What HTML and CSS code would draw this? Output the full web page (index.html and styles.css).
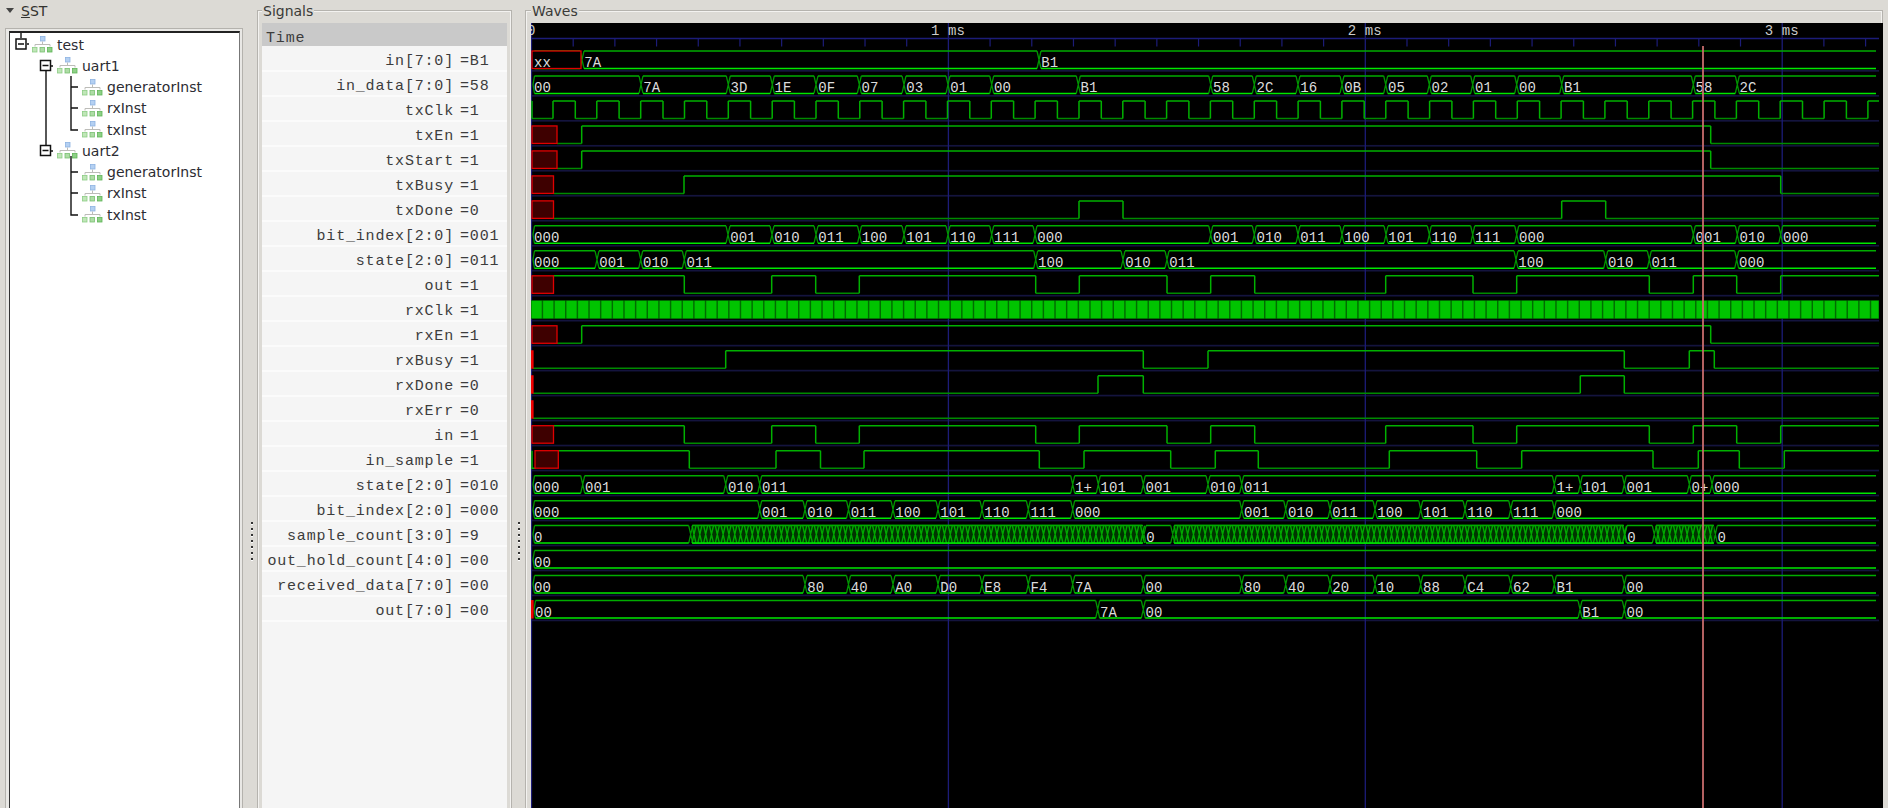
FILE: index.html
```html
<!DOCTYPE html>
<html lang="en">
<head>
  <meta charset="UTF-8" />
  <title>GTKWave - test</title>
  <link rel="stylesheet" href="styles.css">
</head>
<body>
  <svg class="defs" width="0" height="0">
    <symbol id="hier" viewBox="0 0 21 17">
      <rect x="8.5" y="0.5" width="4.5" height="4.5" fill="#b4d0f2" stroke="#8db2e2" stroke-width="0.8"/>
      <path d="M10.5 5.5V8M3 10.5V8.5H18V10.5" fill="none" stroke="#bcbcb8" stroke-width="1"/>
      <rect x="0.5" y="11.5" width="4.5" height="4.5" fill="#c0e6b8" stroke="#8ccc84" stroke-width="0.8"/>
      <rect x="8" y="11.5" width="4.5" height="4.5" fill="#aedca6" stroke="#78c070" stroke-width="0.8"/>
      <rect x="15.5" y="11.5" width="4.5" height="4.5" fill="#8ed086" stroke="#60b458" stroke-width="0.8"/>
    </symbol>
  </svg>

  <div class="app">
    <div class="sst">
      <div class="sst-head">
        <span class="arrow"></span>
        <span class="sst-title"><u>S</u>ST</span>
      </div>
      <div class="tree-frame">
        <div class="tree">
          <svg class="tree-lines" width="231" height="240" viewBox="10 33 231 240">
            <path d="M21 33V38M27 44H29M46 71V145M50 66H53M71 76V130H78M71 87H78M71 108H78M50 151H53M71 156V215H78M71 172H78M71 193H78" fill="none" stroke="#111" stroke-width="1.4"/>
            <path d="M16 39H26V49H16ZM40.5 60.5H50.5V70.5H40.5ZM40.5 145.5H50.5V155.5H40.5Z" fill="#fff" stroke="#111" stroke-width="1.5"/>
            <path d="M18 44H24M42.5 65.5H48.5M42.5 150.5H48.5" stroke="#111" stroke-width="1.3"/>
          </svg>
          <div class="node lvl0"><svg class="ico"><use href="#hier"/></svg>test</div>
          <div class="node lvl1"><svg class="ico"><use href="#hier"/></svg>uart1</div>
          <div class="node lvl2"><svg class="ico"><use href="#hier"/></svg>generatorInst</div>
          <div class="node lvl2"><svg class="ico"><use href="#hier"/></svg>rxInst</div>
          <div class="node lvl2"><svg class="ico"><use href="#hier"/></svg>txInst</div>
          <div class="node lvl1"><svg class="ico"><use href="#hier"/></svg>uart2</div>
          <div class="node lvl2"><svg class="ico"><use href="#hier"/></svg>generatorInst</div>
          <div class="node lvl2"><svg class="ico"><use href="#hier"/></svg>rxInst</div>
          <div class="node lvl2"><svg class="ico"><use href="#hier"/></svg>txInst</div>
        </div>
      </div>
    </div>

    <div class="handle first"><span class="dots"></span></div>

    <div class="frame signals">
      <span class="frame-label">Signals</span>
      <div class="sig-list">
        <div class="sig-time">Time</div>
        <div class="sig"><span class="name">in[7:0]</span><span class="val">=B1</span></div>
        <div class="sig"><span class="name">in_data[7:0]</span><span class="val">=58</span></div>
        <div class="sig"><span class="name">txClk</span><span class="val">=1</span></div>
        <div class="sig"><span class="name">txEn</span><span class="val">=1</span></div>
        <div class="sig"><span class="name">txStart</span><span class="val">=1</span></div>
        <div class="sig"><span class="name">txBusy</span><span class="val">=1</span></div>
        <div class="sig"><span class="name">txDone</span><span class="val">=0</span></div>
        <div class="sig"><span class="name">bit_index[2:0]</span><span class="val">=001</span></div>
        <div class="sig"><span class="name">state[2:0]</span><span class="val">=011</span></div>
        <div class="sig"><span class="name">out</span><span class="val">=1</span></div>
        <div class="sig"><span class="name">rxClk</span><span class="val">=1</span></div>
        <div class="sig"><span class="name">rxEn</span><span class="val">=1</span></div>
        <div class="sig"><span class="name">rxBusy</span><span class="val">=1</span></div>
        <div class="sig"><span class="name">rxDone</span><span class="val">=0</span></div>
        <div class="sig"><span class="name">rxErr</span><span class="val">=0</span></div>
        <div class="sig"><span class="name">in</span><span class="val">=1</span></div>
        <div class="sig"><span class="name">in_sample</span><span class="val">=1</span></div>
        <div class="sig"><span class="name">state[2:0]</span><span class="val">=010</span></div>
        <div class="sig"><span class="name">bit_index[2:0]</span><span class="val">=000</span></div>
        <div class="sig"><span class="name">sample_count[3:0]</span><span class="val">=9</span></div>
        <div class="sig"><span class="name">out_hold_count[4:0]</span><span class="val">=00</span></div>
        <div class="sig"><span class="name">received_data[7:0]</span><span class="val">=00</span></div>
        <div class="sig"><span class="name">out[7:0]</span><span class="val">=00</span></div>
      </div>
    </div>

    <div class="handle second"><span class="dots"></span></div>

    <div class="frame waves">
      <span class="frame-label">Waves</span>
      <svg id="wave" class="wave" width="1352" height="785" viewBox="531 23 1352 785"></svg>
    </div>
  </div>

  <script src="app.js"></script>
</body>
</html>
```

FILE: styles.css
```css
html, body {
  margin: 0;
  height: 100%;
  overflow: hidden;
  background: #dcdad5;
  color: #33332f;
  font-family: "DejaVu Sans", sans-serif;
  font-size: 14px;
}
.defs { position: absolute; }
.app {
  display: flex;
  height: 808px;
  overflow: hidden;
}

/* left tree */
.sst {
  width: 247px;
  flex: none;
  padding-left: 5px;
  box-sizing: border-box;
}
.sst-head {
  height: 28px;
  display: flex;
  align-items: flex-start;
  line-height: 23px;
}
.arrow {
  width: 0;
  height: 0;
  margin: 8px 7px 0 1px;
  border-left: 4.5px solid transparent;
  border-right: 4.5px solid transparent;
  border-top: 5px solid #444;
}
.tree-frame {
  width: 238px;
  height: 800px;
  box-sizing: border-box;
  border: 1px solid #b4b2ad;
  border-bottom: 0;
  padding: 2px 2px 0 3px;
  background: #e9e8e5;
}
.tree {
  position: relative;
  height: 100%;
  box-sizing: border-box;
  background: #fff;
  border-top: 2px solid #222;
  border-left: 1px solid #333;
  border-right: 1px solid #777;
  padding-top: 1px;
}
.tree-lines { position: absolute; left: 0; top: 0; }
.node {
  position: relative;
  height: 21.25px;
  display: flex;
  align-items: center;
  color: #2c2c33;
}
.lvl0 { padding-left: 22px; }
.lvl1 { padding-left: 47px; }
.lvl2 { padding-left: 72px; }
.ico {
  width: 21px;
  height: 17px;
  margin-right: 4px;
  flex: none;
}

/* pane handles */
.handle {
  flex: none;
  box-sizing: border-box;
  padding-top: 522px;
  display: flex;
  justify-content: center;
}
.handle.first { width: 10px; }
.handle.second { width: 13px; }
.dots {
  width: 2px;
  height: 42px;
  background: repeating-linear-gradient(#333 0 2px, #fff 2px 3px, transparent 3px 6px);
}

/* framed panes */
.frame {
  flex: none;
  box-sizing: border-box;
  height: 830px;
  margin-top: 10px;
  border: 1px solid #b5b3ae;
  box-shadow: inset 0 0 0 1px #f3f2f0;
}
.frame-label {
  display: block;
  height: 22px;
  margin-top: -10px;
  line-height: 20px;
  color: #3a3a38;
}
.signals {
  width: 255px;
  padding: 0 4px;
}
.waves {
  width: 1358px;
  padding: 0 4px 0 5px;
}
.frame-label {
  width: fit-content;
  max-height: 22px;
  background: linear-gradient(#dcdad5 14px, transparent 14px);
  padding: 0 1px;
}

/* signal names */
.sig-list {
  font-family: "Liberation Mono", monospace;
  font-size: 15px;
  letter-spacing: 0.82px;
  color: #3c3c3c;
  background: #f5f5f5;
  height: 800px;
}
.sig-time {
  height: 23px;
  margin-bottom: 1px;
  background: #c9c9c9;
  padding-left: 4px;
  line-height: 31px;
}
.sig {
  height: 23px;
  display: flex;
  line-height: 29px;
  border-bottom: 2px solid #fbfbfb;
}
.name {
  width: 192px;
  text-align: right;
}
.val { margin-left: 6px; }

/* wave canvas */
.wave {
  display: block;
  background: #000;
}
.bus-text, .time-text {
  font-family: "Liberation Mono", monospace;
  font-size: 14px;
  letter-spacing: 0.1px;
  fill: #dcdcdc;
}
.time-text { fill: #cbcbcb; }
```

FILE: app.js
```js
const svg = document.getElementById("wave");
const LEFT = 531.5, RIGHT = 1879, BUS_END = 1876, BOTTOM = 808;
const ZERO = 531.5, MS = 416.9;
const GRID = "#1c1c78", ROWLINE = "#14143e";
const HIGH = "#00b000", LOW = "#008a00", BUS_TOP = "#00ac00", BUS_LOW = "#00e800";
let out = "";

const top_ = (i) => 51 + 24.98 * i;
const bot = (i) => top_(i) + 17.5;

function line(d, color, w) {
  out += `<path d="${d}" fill="none" stroke="${color}" stroke-width="${w || 1.5}"/>`;
}

// level: 1 high, 0 low, toggles at every edge
function digital(i, start, level, edges) {
  let hi = "", lo = "", x = start;
  const list = edges.concat([RIGHT]);
  list.forEach((e, n) => {
    const y = level ? top_(i) : bot(i);
    if (level) hi += `M${x} ${y}H${e}`;
    else lo += `M${x} ${y}H${e}`;
    if (n < list.length - 1) hi += `M${e} ${top_(i)}V${bot(i)}`;
    x = e;
    level = 1 - level;
  });
  line(lo, LOW);
  line(hi, HIGH);
}

function bus(i, times, values, start) {
  const a = top_(i), b = bot(i), mid = (a + b) / 2;
  let upper = "", lower = "", cross = "";
  let x = start || 533;
  cross += `M${x + 1.5} ${a}L${x} ${mid}L${x + 1.5} ${b}`;
  let prev = x + 1.5;
  times.concat([BUS_END + 2]).forEach((t, n) => {
    upper += `M${prev} ${a}H${t - 2}`;
    lower += `M${prev} ${b}H${t - 2}`;
    if (n < times.length) cross += `M${t - 2} ${a}L${t + 2} ${b}M${t - 2} ${b}L${t + 2} ${a}`;
    prev = t + 2;
  });
  line(cross, "#009400", 1.3);
  line(upper, BUS_TOP);
  line(lower, BUS_LOW);
  values.forEach((v, n) => {
    const tx = n === 0 ? x + 1 : times[n - 1] + 2.2;
    out += `<text class="bus-text" x="${tx}" y="${a + 16}">${v}</text>`;
  });
}

function redBox(i, x1, x2) {
  out += `<rect x="${x1}" y="${top_(i)}" width="${x2 - x1}" height="17.5" fill="#3e0000" stroke="#e00000" stroke-width="1.3"/>`;
}
function redStripe(i) {
  out += `<rect x="531" y="${top_(i) - 0.5}" width="2.6" height="18.5" fill="#f00000"/>`;
}

// grid and ruler
for (let i = 0; i <= 22; i++) {
  out += `<rect x="531" y="${top_(i) + 19}" width="${RIGHT - 531}" height="1.7" fill="${ROWLINE}"/>`;
}
let ticks = "";
for (let k = 0; k <= 32; k++) {
  const x = ZERO + MS * k / 10;
  if (k % 10 === 0) line(`M${x} 23V${BOTTOM}`, GRID, 1.3);
  else ticks += `M${x} 38.5V46.5`;
}
line(ticks, GRID, 1.2);
line(`M${LEFT} 38.5H${RIGHT}`, GRID, 1.3);
out += `<text class="time-text" x="527" y="35">0</text>`;
[1, 2, 3].forEach((m) => {
  out += `<text class="time-text" x="${ZERO + MS * m - 17.5}" y="35">${m} ms</text>`;
});

// edge lists
const txOut = [684.3, 771.7, 815.7, 859.3, 1035.7, 1079.3, 1167, 1210.7, 1254.7, 1385.7, 1473, 1516.7, 1649.3, 1693.3, 1736.7, 1780.7];
const sampled = [689.3, 776, 820.5, 864, 1039.3, 1084, 1170.7, 1215.3, 1258.3, 1389.3, 1476.7, 1521.7, 1653, 1698.3, 1739.3, 1784.3];
const clkEdges = [532];
for (let k = 0; k < 31; k++) {
  const rise = 553 + 43.83 * k;
  clkEdges.push(Math.round(rise * 10) / 10);
  if (rise + 22.3 < RIGHT) clkEdges.push(Math.round((rise + 22.3) * 10) / 10);
}

// 0 in[7:0]
bus(0, [582, 1039], ["xx", "7A", "B1"]);
out += `<rect x="532" y="${top_(0)}" width="49" height="17.5" fill="#000" stroke="#e00000" stroke-width="1.3"/>`;
out += `<text class="bus-text" x="534" y="${top_(0) + 16}">xx</text>`;

// 1 in_data[7:0]
bus(1, [641, 728.3, 772.3, 816, 859.3, 904, 948, 991.7, 1078.3, 1210.7, 1254.3, 1298, 1342, 1385.7, 1429.3, 1472.7, 1516.7, 1561.7, 1693.3, 1737.3],
  ["00", "7A", "3D", "1E", "0F", "07", "03", "01", "00", "B1", "58", "2C", "16", "0B", "05", "02", "01", "00", "B1", "58", "2C"]);

// 2 txClk
digital(2, 531.5, 1, clkEdges);

// 3 txEn, 4 txStart
digital(3, 557, 0, [581.7, 1710.7]); redBox(3, 532, 557);
digital(4, 557, 0, [581.7, 1710.7]); redBox(4, 532, 557);

// 5 txBusy, 6 txDone
digital(5, 553.5, 0, [684, 1780.7]); redBox(5, 532, 553.5);
digital(6, 553.5, 0, [1079, 1123, 1561.7, 1605.7]); redBox(6, 532, 553.5);

// 7 bit_index, 8 state
bus(7, [728, 772, 816, 859.5, 904, 948, 991.7, 1035, 1210.7, 1254.3, 1298, 1342, 1386, 1429.3, 1472.7, 1516.7, 1693.3, 1737.3, 1780.7],
  ["000", "001", "010", "011", "100", "101", "110", "111", "000", "001", "010", "011", "100", "101", "110", "111", "000", "001", "010", "000"]);
bus(8, [597, 640.7, 684.3, 1035.7, 1123, 1167, 1516, 1605.7, 1649.3, 1736.7],
  ["000", "001", "010", "011", "100", "010", "011", "100", "010", "011", "000"]);

// 9 out
digital(9, 553.5, 1, txOut); redBox(9, 532, 553.5);

// 10 rxClk: too fast to show, solid blocks
const PERIOD = 11.65;
out += `<rect x="531" y="${top_(10) - 0.5}" width="${RIGHT - 531}" height="18.5" fill="#006c00"/>`;
for (let x = 531.5; x < RIGHT; x += PERIOD) {
  const w = Math.min(10.2, RIGHT - x - 0.5);
  out += `<rect x="${x}" y="${top_(10)}" width="${w}" height="17.5" fill="#00c400"/>`;
}

// 11 rxEn .. 14 rxErr
digital(11, 557, 0, [581.7, 1710.7]); redBox(11, 532, 557);
digital(12, 533, 0, [725.7, 1143.3, 1208, 1624.3, 1689.3, 1714.3]); redStripe(12);
digital(13, 533, 0, [1098, 1143.3, 1580.3, 1624.3]); redStripe(13);
digital(14, 533, 0, []); redStripe(14);

// 15 in, 16 in_sample
digital(15, 553.5, 1, txOut); redBox(15, 532, 553.5);
line(`M532 ${top_(16)}V${bot(16)}H536`, HIGH);
digital(16, 558, 1, sampled); redBox(16, 535, 558.3);

// 17 state, 18 bit_index
bus(17, [582.7, 725.7, 759.7, 1072.7, 1098.3, 1143.3, 1208, 1241.7, 1554.3, 1580.3, 1624.3, 1689.3, 1712],
  ["000", "001", "010", "011", "1+", "101", "001", "010", "011", "1+", "101", "001", "0+", "000"]);
bus(18, [759.7, 805, 848.5, 893, 938, 982, 1028.3, 1072.7, 1241.7, 1285.7, 1330, 1375, 1420.7, 1465, 1510.7, 1554.3],
  ["000", "001", "010", "011", "100", "101", "110", "111", "000", "001", "010", "011", "100", "101", "110", "111", "000"]);

// 19 sample_count: counting bursts are drawn as dense crossings
function burst(i, x1, x2) {
  const a = top_(i), b = bot(i);
  let d = "";
  for (let x = x1; x < x2 - 1; x += PERIOD / 2) {
    d += `M${x} ${a}L${x + 4} ${b}M${x} ${b}L${x + 4} ${a}`;
  }
  out += `<rect x="${x1}" y="${a}" width="${x2 - x1}" height="17.5" fill="#003400"/>`;
  line(d, "#00a800", 1.4);
  line(`M${x1} ${a}H${x2}`, BUS_TOP);
  line(`M${x1} ${b}H${x2}`, BUS_LOW);
}
bus(19, [690.7, 1144, 1172.7, 1625, 1654.3, 1715.3], ["0", "", "0", "", "0", "", "0"]);
burst(19, 692, 1143);
burst(19, 1174, 1624);
burst(19, 1656, 1714);

// 20 out_hold_count, 21 received_data
bus(20, [], ["00"]);
bus(21, [805, 848.5, 893, 938, 982, 1028.3, 1072.7, 1143.3, 1241.7, 1285.7, 1330, 1375, 1420.7, 1465, 1510.7, 1554.3, 1624.3],
  ["00", "80", "40", "A0", "D0", "E8", "F4", "7A", "00", "80", "40", "20", "10", "88", "C4", "62", "B1", "00"]);

// 22 out[7:0]
bus(22, [1097.7, 1143.3, 1580, 1624.3], ["00", "7A", "00", "B1", "00"], 534);
redStripe(22);

// marker
line(`M1703 46V${BOTTOM}`, "#c86c6c", 1.8);

svg.innerHTML = out;
```
